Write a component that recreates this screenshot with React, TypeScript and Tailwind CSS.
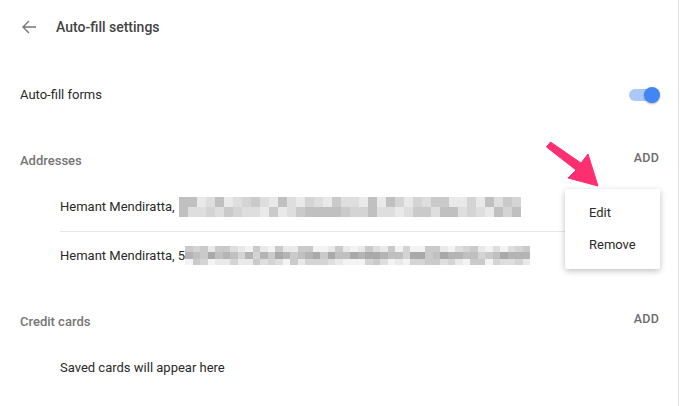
import React from 'react';

const grays = [
  'bg-[#f3f3f3]',
  'bg-[#e9e9e9]',
  'bg-[#dedede]',
  'bg-[#d4d4d4]',
  'bg-[#cacaca]',
  'bg-[#c0c0c0]',
  'bg-[#b4b4b4]',
  'bg-[#a9a9a9]',
];

// deterministic pseudo-random pixel blocks for the blurred address
const Pixelated: React.FC<{ cols: number; rows: number; cellW: string; cellH: string; seed: number; bias: number[] }> = ({ cols, rows, cellW, cellH, seed, bias }) => {
  let s = seed;
  const next = () => {
    s = (s * 9301 + 49297) % 233280;
    return s / 233280;
  };
  return (
    <div className="flex flex-col">
      {Array.from({ length: rows }).map((_, r) => (
        <div key={r} className="flex">
          {Array.from({ length: cols }).map((_, c) => {
            const idx = Math.min(grays.length - 1, Math.floor(next() * 5) + bias[r]);
            return <div key={c} className={`${cellW} ${cellH} ${grays[idx]}`} />;
          })}
        </div>
      ))}
    </div>
  );
};

const SectionHeader: React.FC<{ title: string }> = ({ title }) => (
  <div className="h-[48px] flex items-center justify-between pl-[20px] pr-[19px]">
    <span className="text-[13px] font-medium text-[#757575] mt-[3px]">{title}</span>
    <span className="text-[12.5px] font-medium text-[#6b6b6b] tracking-[0.2px] -mt-[2px]">ADD</span>
  </div>
);

export default function App() {
  return (
    <div className="relative w-[679px] h-[406px] bg-white border-r border-[#e3e3e3] text-[#333] overflow-hidden" style={{ fontFamily: 'Roboto, "Liberation Sans", sans-serif' }}>
      {/* header */}
      <div className="h-[54px] flex items-center pl-[21px]">
        <svg width="16" height="16" viewBox="0 0 16 16" className="text-[#777]">
          <path d="M15 8H2M8 2L2 8l6 6" fill="none" stroke="currentColor" strokeWidth="1.4" />
        </svg>
        <span className="ml-[19px] text-[14px] font-medium text-[#444]">Auto-fill settings</span>
      </div>

      {/* toggle row */}
      <div className="mt-[17px] h-[48px] flex items-center justify-between pl-[20px] pr-[21px]">
        <span className="text-[13px] text-[#2a2a2a]">Auto-fill forms</span>
        <div className="relative w-[28px] h-[16px] flex items-center">
          <div className="w-[28px] h-[12px] rounded-full bg-[#abc8fa]" />
          <div className="absolute right-[-3px] top-0 w-[16px] h-[16px] rounded-full bg-[#4285f4] shadow-[0_1px_2px_rgba(0,0,0,0.3)]" />
        </div>
      </div>

      {/* addresses */}
      <div className="mt-[16px]">
        <SectionHeader title="Addresses" />
        <div className="ml-[60px] mr-[20px]">
          <div className="h-[49px] flex items-center border-b border-[#e6e6e6]">
            <span className="text-[13px] text-[#2a2a2a]">Hemant Mendiratta,</span>
            <div className="ml-[4px] -mt-[1px]">
              <Pixelated cols={38} rows={2} cellW="w-[9px]" cellH="h-[10px]" seed={17} bias={[1, 1]} />
            </div>
          </div>
          <div className="h-[48px] flex items-center">
            <span className="text-[13px] text-[#2a2a2a]">Hemant Mendiratta, 5</span>
            <div className="-mt-[1px]">
              <Pixelated cols={46} rows={3} cellW="w-[7.5px]" cellH="h-[6.5px]" seed={91} bias={[0, 3, 0]} />
            </div>
          </div>
        </div>
      </div>

      {/* credit cards */}
      <div className="mt-[16px]">
        <SectionHeader title="Credit cards" />
        <div className="ml-[60px] h-[48px] flex items-center">
          <span className="text-[13px] text-[#2a2a2a]">Saved cards will appear here</span>
        </div>
      </div>

      {/* action menu */}
      <div className="absolute left-[565px] top-[189px] w-[95px] h-[80px] bg-white rounded-[2px] shadow-[0_2px_6px_rgba(0,0,0,0.25)] flex flex-col justify-center py-[7px]">
        <div className="h-[32px] flex items-center pl-[24px] text-[13px] text-[#2a2a2a]">Edit</div>
        <div className="h-[32px] flex items-center pl-[24px] text-[13px] text-[#2a2a2a]">Remove</div>
      </div>

      {/* annotation arrow */}
      <svg className="absolute left-0 top-0 pointer-events-none" width="681" height="406">
        <polygon
          points="550.5,142 581,163 588,154 598,186 568,178 576,170 546.5,147"
          fill="#fd2f70"
          stroke="#fd2f70"
          strokeWidth="1"
          strokeLinejoin="round"
        />
      </svg>
    </div>
  );
}
